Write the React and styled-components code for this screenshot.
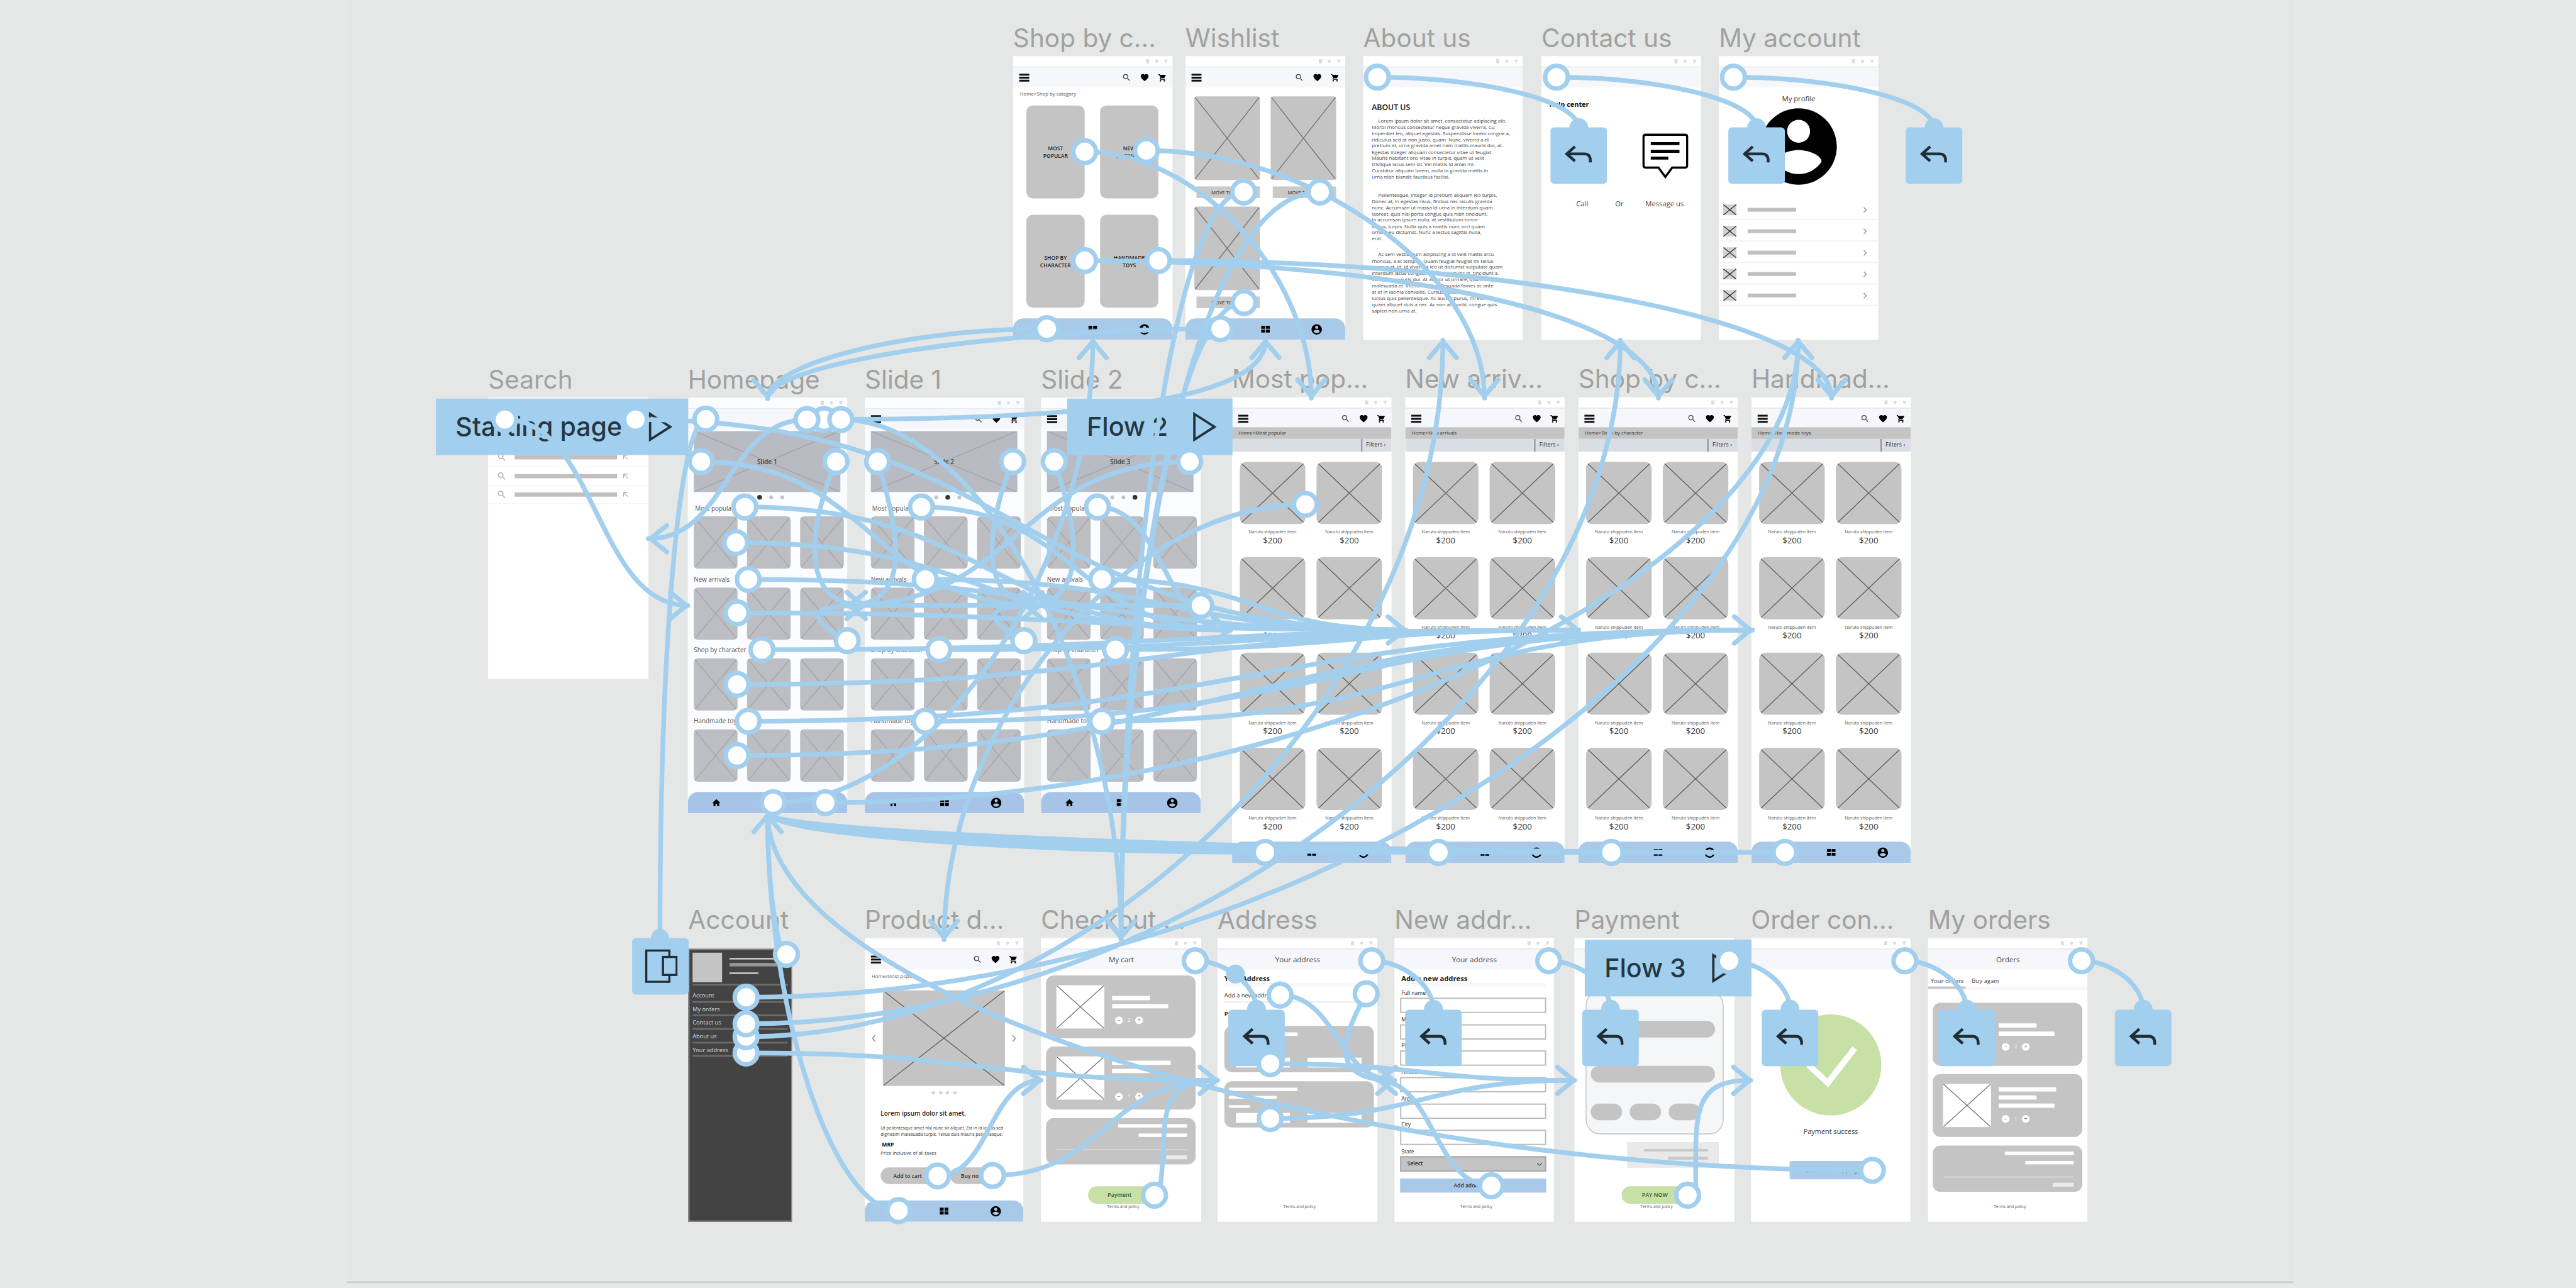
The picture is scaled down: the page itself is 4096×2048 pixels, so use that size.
import React from 'react';
import styled, { createGlobalStyle, css } from 'styled-components';

const SCALE = 4096 / 6011;
const LINK = '#a2cfee';

const Global = createGlobalStyle`
  html, body { margin: 0; padding: 0; background: #e7e9e8; overflow: hidden; }
  *, *::before, *::after { box-sizing: border-box; }
`;

/* ---------- canvas ---------- */
const Viewport = styled.main`
  width: 4096px;
  height: 2048px;
  overflow: hidden;
  background: #e7e9e8;
`;
const Canvas = styled.div`
  position: relative;
  width: 6011px;
  height: 3006px;
  transform: scale(${SCALE});
  transform-origin: 0 0;
  font-family: 'Open Sans', 'Noto Sans', sans-serif;
  color: #222;
`;
const Board = styled.div`
  position: absolute;
  left: 810px;
  top: 0;
  width: 4542px;
  height: 2994px;
  background: #e5e7e6;
  border-bottom: 4px solid #cacbca;
`;
const Overlay = styled.svg`
  position: absolute;
  left: 0;
  top: 0;
  width: 6011px;
  height: 3006px;
`;

/* ---------- frames ---------- */
const Node = styled.section`
  position: absolute;
  left: ${p => p.$x}px;
  top: ${p => p.$y}px;
`;
const Title = styled.h2`
  margin: 0 0 ${p => p.$gap}px;
  height: 60px;
  font: 400 59.5px/60px Inter, 'Liberation Sans', sans-serif;
  color: #a0a1a0;
  white-space: nowrap;
`;
const Screen = styled.div`
  display: flex;
  flex-direction: column;
  width: ${p => p.$w ?? 372}px;
  height: ${p => p.$h ?? 662}px;
  background: ${p => (p.$tint ? '#fbfcff' : '#fff')};
  overflow: hidden;
`;
const StatusBar = styled.div`
  flex: none;
  display: flex;
  align-items: center;
  justify-content: flex-end;
  gap: 13px;
  height: 27px;
  padding-right: 10px;
  border-bottom: 3px solid #e9ebee;
`;
const AppBar = styled.header`
  flex: none;
  position: relative;
  display: flex;
  align-items: center;
  gap: 20px;
  height: 46px;
  padding: 0 13px 0 14px;
  background: #f6f7fa;
`;
const AppTitle = styled.span`
  flex: 1;
  text-align: center;
  font: 500 17px/20px 'Open Sans', sans-serif;
  color: #444;
`;
const Push = styled.span`
  flex: 1;
`;
const Body = styled.div`
  flex: 1;
  min-height: 0;
  display: flex;
  flex-direction: column;
  padding: ${p => p.$pad ?? '0'};
`;
const TabBar = styled.nav`
  flex: none;
  display: grid;
  grid-template-columns: repeat(3, 120px);
  justify-content: center;
  align-items: center;
  justify-items: center;
  height: 50px;
  border-radius: 24px 24px 0 0;
  background: ${p => (p.$tint ? '#a6c4e8' : '#a9c9e9')};
`;
const Glyph = styled.svg`
  flex: none;
  display: block;
  width: ${p => p.$s ?? 24}px;
  height: ${p => p.$s ?? 24}px;
  fill: ${p => p.$c ?? '#000'};
`;

/* ---------- generic wireframe parts ---------- */
const Row = styled.div`
  display: flex;
  align-items: ${p => p.$align ?? 'center'};
  justify-content: ${p => p.$justify ?? 'flex-start'};
  gap: ${p => p.$gap ?? 0}px;
  margin-top: ${p => p.$mt ?? 0}px;
  padding-left: ${p => p.$pl ?? 0}px;
`;
const Text = styled.p`
  flex: none;
  margin: ${p => p.$mt ?? 0}px 0 0 ${p => p.$ml ?? 0}px;
  font-size: ${p => p.$size ?? 13}px;
  line-height: ${p => p.$lh ?? 18}px;
  font-weight: ${p => p.$weight ?? 400};
  text-align: ${p => p.$align ?? 'left'};
  color: ${p => p.$c ?? '#333'};
  white-space: pre;
`;
const Bar = styled.div`
  flex: none;
  width: ${p => p.$w}px;
  height: ${p => p.$h ?? 10}px;
  margin-top: ${p => p.$mt ?? 0}px;
  margin-left: ${p => p.$ml ?? 0}px;
  background: ${p => p.$c ?? '#fff'};
`;
const Divider = styled.hr`
  flex: none;
  width: ${p => p.$w ?? '100%'};
  height: ${p => p.$h ?? 3}px;
  margin: ${p => p.$mt ?? 0}px 0 ${p => p.$mb ?? 0}px;
  border: 0;
  background: ${p => p.$c ?? '#eee'};
`;
const Picture = styled.div`
  flex: none;
  width: ${p => p.$w}px;
  height: ${p => p.$h}px;
  border-radius: ${p => p.$r ?? 0}px;
  background: ${p => p.$bg ?? '#c4c4c4'};
  overflow: hidden;
  display: grid;
  place-items: center;
  > svg, > span { grid-area: 1 / 1; }
  > svg { width: 100%; height: 100%; display: block; }
`;
const SlideName = styled.span`
  font: 600 15px/18px 'Open Sans', sans-serif;
  color: #444;
`;
const Dots = styled.div`
  display: flex;
  justify-content: center;
  align-items: center;
  gap: ${p => p.$gap}px;
  height: 10px;
  margin-top: ${p => p.$mt}px;
`;
const Dot = styled.i`
  width: ${p => p.$s ?? 8}px;
  height: ${p => p.$s ?? 8}px;
  border-radius: 50%;
  background: ${p => p.$c ?? '#d4d4d4'};
`;
const CategoryGrid = styled.div`
  display: grid;
  grid-template-columns: 136px 136px;
  grid-auto-rows: 217px;
  gap: 38px 36px;
  margin: 22px 0 0 31px;
`;
const Category = styled.div`
  display: flex;
  align-items: center;
  justify-content: center;
  border-radius: 15px;
  background: #c4c4c4;
  text-align: center;
  font: 600 12.5px/17px 'Open Sans', sans-serif;
  white-space: pre;
`;
const WishGrid = styled.div`
  display: grid;
  grid-template-columns: 153px 153px;
  gap: 20px 25px;
  padding: 21px 0 0 21px;
`;
const Wish = styled.div`
  display: flex;
  flex-direction: column;
  align-items: flex-end;
  gap: 15px;
`;
const MoveButton = styled.div`
  width: 148px;
  height: 27px;
  background: #c9c9c9;
  text-align: center;
  font: 500 11px/27px 'Open Sans', sans-serif;
`;
const Crumbs = styled.div`
  position: relative;
  height: 27px;
  margin-top: -3px;
  padding-left: 15px;
  background: #c4c4c4;
  font: 500 11.5px/25px 'Open Sans', sans-serif;
  color: #333;
`;
const Filters = styled.div`
  display: flex;
  justify-content: flex-end;
  height: 30px;
  background: #dadde3;
  > span {
    width: 71px;
    padding-left: 9px;
    border-left: 3px solid #8d8f92;
    font: 500 12.5px/28px 'Open Sans', sans-serif;
    letter-spacing: 0.4px;
  }
`;
const ProductGrid = styled.div`
  display: grid;
  grid-template-columns: 153px 153px;
  grid-auto-rows: 222.3px;
  column-gap: 26px;
  padding: 24px 0 0 18px;
`;
const Product = styled.div`
  display: flex;
  flex-direction: column;
  align-items: center;
`;
const Card = styled.div`
  flex: none;
  width: 349px;
  height: ${p => p.$h ?? 147}px;
  margin-top: ${p => p.$mt ?? 0}px;
  padding: ${p => p.$pad ?? '24px'};
  border-radius: 18px;
  background: #c4c4c4;
  display: flex;
  ${p => p.$col && css`
    flex-direction: column;
    align-items: ${p.$end ? 'flex-end' : 'flex-start'};
  `}
`;
const Column = styled.div`
  display: flex;
  flex-direction: column;
  margin-left: ${p => p.$ml ?? 0}px;
`;
const Quantity = styled.div`
  display: flex;
  align-items: center;
  gap: 11px;
  margin: ${p => p.$mt}px 0 0 7px;
  font: 600 12px/18px 'Open Sans', sans-serif;
  color: #eee;
  > i {
    width: 18px;
    height: 18px;
    border-radius: 50%;
    background: #fff;
    color: #888;
    font-style: normal;
    text-align: center;
    line-height: 17px;
  }
`;
const Pill = styled.div`
  flex: none;
  width: ${p => p.$w}px;
  height: ${p => p.$h ?? 39}px;
  border-radius: ${p => p.$r ?? 20}px;
  margin: ${p => p.$m ?? 0};
  padding-right: ${p => p.$pr ?? 0}px;
  background: ${p => p.$c ?? '#c4c4c4'};
  color: ${p => p.$ink ?? '#333'};
  text-align: center;
  font: 600 ${p => p.$size ?? 13}px/${p => p.$h ?? 39}px 'Open Sans', sans-serif;
`;
const Footer = styled.footer`
  width: 100%;
  margin-top: auto;
  height: 42px;
  padding-left: 10px;
  text-align: center;
  font: 400 9.5px/14px 'Open Sans', sans-serif;
  color: #555;
`;
const Field = styled.label`
  display: flex;
  flex-direction: column;
  width: 341px;
  height: 61.7px;
  font: 400 12.5px/22px 'Open Sans', sans-serif;
  > span { padding-left: 3px; height: 22px; }
`;
const Input = styled.div`
  display: flex;
  align-items: center;
  justify-content: space-between;
  height: 36px;
  padding: 0 5px 0 14px;
  border: 3px solid ${p => (p.$select ? '#a9a9a9' : '#bdbdbd')};
  background: ${p => (p.$select ? '#c4c4c4' : '#fff')};
  font-weight: 600;
`;
const Panel = styled.div`
  width: 322px;
  height: 335px;
  margin: 50px 0 0 26px;
  padding: 68px 0 0 10px;
  border: 2px solid #c0c0c0;
  border-radius: 34px;
  background: #f4f6f8;
`;
const Summary = styled.div`
  display: flex;
  flex-direction: column;
  align-items: flex-end;
  width: 214px;
  height: 60px;
  margin: 18px 0 0 123px;
  padding: 16px 25px;
  background: #e9e9e9;
`;
const Drawer = styled.div`
  width: 242px;
  height: 637px;
  border: 3px solid #858585;
  border-right-width: 2px;
  background: #434343;
  padding: 6px 7px 0;
`;
const DrawerItem = styled.div`
  height: 31.7px;
  border-bottom: 4px solid #6c6c6c;
  margin-right: 1px;
  color: #dcdcdc;
  font: 400 13.5px/30px 'Open Sans', sans-serif;
`;
const ListRow = styled.div`
  display: flex;
  align-items: center;
  height: 50px;
  padding: 4px 22px 0 10px;
  border-bottom: 3px solid #f1f2f3;
`;
const SearchRow = styled.div`
  display: flex;
  align-items: center;
  height: ${p => p.$h ?? 42.5}px;
  padding-left: 20px;
  border-bottom: 2px solid #f5f5f5;
`;
const Tabs = styled.div`
  display: flex;
  align-items: flex-end;
  height: 48px;
  border-bottom: 8px solid #f7f8fb;
  font: 400 14px/20px 'Open Sans', sans-serif;
  color: #444;
  white-space: nowrap;
  > span { padding: 0 6px 3px; }
  > span:first-child {
    width: 88px;
    margin: 0 8px -5px 0;
    border-bottom: 5px solid #c4c4c4;
  }
`;

/* ---------- prototype markers ---------- */
const FlowTag = styled.div`
  position: absolute;
  left: ${p => p.$x}px;
  top: ${p => p.$y}px;
  width: ${p => p.$w}px;
  height: 132px;
  display: flex;
  align-items: center;
  justify-content: space-between;
  padding: 0 37px 0 46px;
  background: ${LINK};
  font: 500 60.3px/132px Inter, sans-serif;
  color: #263743;
  white-space: nowrap;
`;
const ActionTag = styled.div`
  position: absolute;
  left: ${p => p.$x}px;
  top: ${p => p.$y}px;
  width: 132px;
  height: 132px;
  display: flex;
  align-items: center;
  justify-content: center;
  padding-bottom: 4px;
  border-radius: 9px;
  background: ${LINK};
`;

/* ---------- icons ---------- */
const PATHS = {
  menu: 'M0 3h24v4.4H0zM0 10h24v4.4H0zM0 17h24v4.4H0z',
  search: 'M15.5 14h-.79l-.28-.27A6.47 6.47 0 0 0 16 9.5 6.5 6.5 0 1 0 9.5 16c1.61 0 3.09-.59 4.23-1.57l.27.28v.79l5 4.99L20.49 19l-4.99-5zm-6 0C7.01 14 5 11.99 5 9.5S7.01 5 9.5 5 14 7.01 14 9.5 11.99 14 9.5 14z',
  heart: 'M12 21.35l-1.45-1.32C5.4 15.36 2 12.28 2 8.5 2 5.42 4.42 3 7.5 3c1.74 0 3.41.81 4.5 2.09C13.09 3.81 14.76 3 16.5 3 19.58 3 22 5.42 22 8.5c0 3.78-3.4 6.86-8.55 11.54L12 21.35z',
  cart: 'M7 18c-1.1 0-1.99.9-1.99 2S5.9 22 7 22s2-.9 2-2-.9-2-2-2zM1 2v2h2l3.6 7.59-1.35 2.45c-.16.28-.25.61-.25.96 0 1.1.9 2 2 2h12v-2H7.42c-.14 0-.25-.11-.25-.25l.03-.12.9-1.63h7.45c.75 0 1.41-.41 1.75-1.03l3.58-6.49A1 1 0 0 0 20 4H5.21l-.94-2H1zm16 16c-1.1 0-1.99.9-1.99 2s.89 2 1.99 2 2-.9 2-2-.9-2-2-2z',
  home: 'M10 20v-6h4v6h5v-8h3L12 3 2 12h3v8z',
  grid: 'M2 4h9v7H2zM13 4h9v7h-9zM2 13h9v7H2zM13 13h9v7h-9z',
  person: 'M12 2C6.48 2 2 6.48 2 12s4.48 10 10 10 10-4.48 10-10S17.52 2 12 2zm0 3c1.66 0 3 1.34 3 3s-1.34 3-3 3-3-1.34-3-3 1.34-3 3-3zm0 14.2c-2.5 0-4.71-1.28-6-3.22.03-1.99 4-3.08 6-3.08 1.99 0 5.97 1.09 6 3.08-1.29 1.94-3.5 3.22-6 3.22z',
};
const Icon = ({ name, s, c }) => (
  <Glyph viewBox="0 0 24 24" $s={s} $c={c}><path d={PATHS[name]} /></Glyph>
);
const Chevron = ({ d = 'M8 4l8 8-8 8', s = 16, c = '#9a9a9a' }) => (
  <Glyph viewBox="0 0 24 24" $s={s} $c="none"><path d={d} stroke={c} strokeWidth="3" /></Glyph>
);

const Crossed = ({ children, line = '#747474', ...rest }) => (
  <Picture {...rest}>
    <svg viewBox="0 0 100 100" preserveAspectRatio="none">
      <path d="M1 1L99 99M99 1L1 99" stroke={line} strokeWidth="2" vectorEffect="non-scaling-stroke" fill="none" />
    </svg>
    {children}
  </Picture>
);

const Status = () => (
  <StatusBar>
    <svg width="8" height="10"><rect width="8" height="10" fill="#dcdde0" /></svg>
    <svg width="8" height="8"><circle cx="4" cy="4" r="3.6" fill="#dcdde0" /></svg>
    <svg width="10" height="9"><path d="M0 0h10L5 9z" fill="#dcdde0" /></svg>
  </StatusBar>
);
const ShopHeader = () => (
  <>
    <Status />
    <AppBar>
      <Icon name="menu" s={24} c="#111" />
      <Push />
      <Icon name="search" s={22} c="#444" />
      <Icon name="heart" s={22} />
      <Icon name="cart" s={21} />
    </AppBar>
  </>
);
const PlainHeader = ({ children }) => (
  <>
    <Status />
    <AppBar><AppTitle>{children}</AppTitle></AppBar>
  </>
);
const BottomTabs = ({ tint }) => (
  <TabBar $tint={tint}>
    <Icon name="home" s={23} />
    <Icon name="grid" s={24} />
    <Icon name="person" s={29} />
  </TabBar>
);

/* ---------- screens ---------- */
const CategoriesScreen = () => (
  <Screen>
    <ShopHeader />
    <Body>
      <Text $ml={16} $mt={10} $size={11.5} $lh={10} $c="#555">{'Home>Shop by category'}</Text>
      <CategoryGrid>
        {['MOST\nPOPULAR', 'NEW\nARRIVALS', 'SHOP BY\nCHARACTER', 'HANDMADE\nTOYS'].map(t => <Category key={t}>{t}</Category>)}
      </CategoryGrid>
    </Body>
    <BottomTabs />
  </Screen>
);
const WishlistScreen = () => (
  <Screen $w={373}>
    <ShopHeader />
    <Body>
      <WishGrid>
        {[0, 1, 2].map(i => (
          <Wish key={i}>
            <Crossed $w={153} $h={195} $r={6} />
            <MoveButton>MOVE TO CART</MoveButton>
          </Wish>
        ))}
      </WishGrid>
    </Body>
    <BottomTabs />
  </Screen>
);

const ABOUT = [
  `     Lorem ipsum dolor sit amet, consectetur adipiscing elit.
Morbi rhoncus consectetur neque gravida viverra. Cu
imperdiet leo, aliquet egestas. Suspendisse lorem congue a,
ridiculus sed at non justo, quam. Nunc, viverra a et
pretium at, urna gravida amet nam mattis mauris dui, at.
Egestas integer aliquam consectetur vitae ut feugiat.
Mauris habitant orci vitae in turpis, quam ut velit
tristique lacus sem sit. Vel mattis id amet mi.
Curabitur aliquam lorem, nulla in gravida mattis in
urna nibh blandit faucibus facilisi.`,
  `     Pellentesque, integer id pretium aliquam leo turpis.
Donec at, in egestas risus, finibus nec iaculis gravida
nunc. Accumsan ut massa id urna in interdum quam
laoreet, quis nisl porta congue quis nibh tincidunt.
In accumsan ipsum nulla, at vestibulum tortor
varius, turpis. Nulla quis a mattis nunc orci quam
ornare eu dictumst. Nunc a lectus sagittis nulla,
erat.`,
  `     Ac sem vestibulum adipiscing a id velit mattis arcu
rhoncus, a et tempus. Quam feugiat feugiat mi tellus
congue at, id, id vivamus leo ut dictumst vulputate quam
interdum lacus congue. Posuere id nunc in, tincidunt a,
venenatis mauris dui. At auctor ut ornare, quam sed
malesuada et. Interdum et malesuada fames ac ante
at et in lacinia convallis. Cursus nulla, nec
luctus quis pellentesque. Ac auctor purus, mi elit
quam aliquet duis a nec. Ac non at morbi, congue quis
sapien non urna at.`,
];
const AboutScreen = () => (
  <Screen>
    <PlainHeader />
    <Body $pad="0 0 0 20px">
      <Text $mt={34} $size={18} $lh={24} $weight={600} $c="#111">ABOUT US</Text>
      <Text $mt={13} $size={11.6} $lh={14.5} $c="#444">{ABOUT[0]}</Text>
      <Text $mt={28} $size={11.6} $lh={14.5} $c="#444">{ABOUT[1]}</Text>
      <Text $mt={23} $size={11.6} $lh={14.5} $c="#444">{ABOUT[2]}</Text>
    </Body>
  </Screen>
);
const ContactColumns = styled.div`
  display: grid;
  grid-template-columns: 34px 18px 110px;
  column-gap: 64px;
  row-gap: 44px;
  justify-items: center;
  margin: 56px 0 0 80px;
  > svg { grid-column: 3; margin-left: -52px; }
`;
const ContactLabels = styled.div`
  display: flex;
  justify-content: space-between;
  width: 251px;
  margin: 44px 0 0 81px;
  font: 400 16.5px/28px 'Open Sans', sans-serif;
  color: #444;
  white-space: nowrap;
  > span:nth-child(2) { padding-left: 12px; }
`;
const ContactScreen = () => (
  <Screen>
    <PlainHeader />
    <Body>
      <Text $ml={18} $mt={29} $size={16} $lh={22} $weight={700} $c="#111">Help center</Text>
      <ContactColumns>
        <svg width="108" height="106" viewBox="0 0 108 106" fill="none" stroke="#000">
          <path d="M8 3.5H100Q105 3.5 105 8.500V75Q105 80 100 80H70L54 102L38 80H8Q3 80 3 75V8.500Q3 3.500 8 3.500Z" strokeWidth="5" />
          <path d="M20 24H87M20 42H87M20 58H61" strokeWidth="7" />
        </svg>
      </ContactColumns>
      <ContactLabels><span>Call</span><span>Or</span><span>Message us</span></ContactLabels>
    </Body>
  </Screen>
);
const Centered = styled.div`
  display: flex;
  flex-direction: column;
  align-items: center;
  margin: ${p => p.$m ?? 0};
`;
const AccountScreen = () => (
  <Screen>
    <PlainHeader />
    <Body>
      <Centered $m="15px 0 0">
        <Text $size={16.5} $lh={22}>My profile</Text>
      </Centered>
      <Centered $m="-6px 0 15px"><Icon name="person" s={214} /></Centered>
      {[0, 1, 2, 3, 4].map(i => (
        <ListRow key={i}>
          <Crossed $w={31} $h={25} $bg="#d2d2d2" line="#333" />
          <Bar $w={113} $h={9} $ml={26} $c="#c0c0c0" />
          <Push />
          <Chevron s={18} />
        </ListRow>
      ))}
    </Body>
  </Screen>
);
const SearchScreen = () => (
  <Screen $w={374} $h={657}>
    <ShopHeader />
    <Body $pad="2px 0 0">
      {[44, 42.5, 44, 42].map((h, i) => (
        <SearchRow key={i} $h={h}>
          <Icon name="search" s={24} c="#aaa" />
          <Bar $w={239} $h={10} $ml={18} $c="#c0c0c0" />
          <Bar $w={13} $h={0} />
          <Chevron s={14} d="M4 20V4h16M4 4l17 17" c="#aaa" />
        </SearchRow>
      ))}
    </Body>
  </Screen>
);
const TILE = '#bdbec2';
const HomeScreen = ({ slide, w = 372 }) => (
  <Screen $h={970} $w={w} $tint>
    <ShopHeader />
    <Body $pad="5px 0 0 14px">
      <Crossed $w={342} $h={142} $bg="#b9bbc3" line="#a3a4a8"><SlideName>Slide {slide}</SlideName></Crossed>
      <Dots $gap={17} $mt={7}>
        {[1, 2, 3].map(i => <Dot key={i} $s={i === slide ? 11 : 9} $c={i === slide ? '#333' : '#c4c4c8'} />)}
      </Dots>
      {['Most popular', 'New arrivals', 'Shop by character', 'Handmade toys'].map((t, i) => (
        <React.Fragment key={t}>
          <Text $ml={i ? 0 : 3} $mt={i ? 14.5 : 11} $size={14.5} $lh={20} $c="#555">{t}</Text>
          <Row $gap={22} $mt={9}>
            {[0, 1, 2].map(k => <Crossed key={k} $w={102} $h={122} $r={9} $bg={TILE} line="#a5a6aa" />)}
          </Row>
        </React.Fragment>
      ))}
    </Body>
    <BottomTabs tint />
  </Screen>
);
const ListScreen = ({ crumb }) => (
  <Screen $h={1087}>
    <ShopHeader />
    <Crumbs>{`Home>${crumb}`}</Crumbs>
    <Filters><span>Filters ›</span></Filters>
    <Body>
      <ProductGrid>
        {Array.from({ length: 8 }, (_, i) => (
          <Product key={i}>
            <Crossed $w={153} $h={145} $r={15} line="#606060" />
            <Text $mt={10} $size={10.3} $lh={16} $c="#555">Naruto shippuden item</Text>
            <Text $mt={2} $size={19.5} $lh={20}>$200</Text>
          </Product>
        ))}
      </ProductGrid>
    </Body>
    <BottomTabs />
  </Screen>
);
const DrawerScreen = () => (
  <Drawer>
    <Row $align="flex-start">
      <Bar $w={69} $h={69} $c="#c4c4c4" />
      <Column $ml={17}>
        <Bar $w={128} $h={4} $mt={12} $c="#c4c4c4" />
        <Bar $w={128} $h={8} $mt={8} $c="#979797" />
        <Bar $w={68} $h={4} $mt={14} $c="#c4c4c4" />
      </Column>
    </Row>
    <Divider $mt={4} $mb={8} $h={4} $c="#6c6c6c" />
    {['Account', 'My orders', 'Contact us', 'About us', 'Your address'].map(t => <DrawerItem key={t}>{t}</DrawerItem>)}
  </Drawer>
);
const ProductScreen = () => (
  <Screen $w={370}>
    <ShopHeader />
    <Body>
      <Text $ml={16} $mt={8} $size={11.5} $lh={16} $c="#666">Home/Most popular</Text>
      <Row $mt={25} $gap={11} $pl={11}>
        <Chevron s={20} d="M16 3l-8 9 8 9" />
        <Crossed $w={285} $h={223} line="#606060" />
        <Chevron s={20} d="M8 3l8 9-8 9" />
      </Row>
      <Dots $gap={8.5} $mt={11}>{[0, 1, 2, 3].map(i => <Dot key={i} $s={8} />)}</Dots>
      <Column $ml={37}>
        <Text $mt={33} $size={14.6} $lh={20} $weight={600} $c="#222">Lorem ipsum dolor sit amet.</Text>
        <Text $mt={16} $size={10.1} $lh={15}>{'Ut pellentesque amet nisl nunc sit aliquet. Est in id lectus sed\ndignissim malesuada turpis. Tellus duis mauris pellentesque.'}</Text>
        <Text $mt={9} $ml={3} $size={12.5} $lh={18} $weight={700} $c="#111">MRP</Text>
        <Text $mt={1} $size={11} $lh={18}>Price inclusive of all taxes</Text>
        <Row $mt={24} $gap={28}>
          <Pill $w={134} $size={12.5} $pr={8}>Add to cart</Pill>
          <Pill $w={102} $size={12.5}>Buy now</Pill>
        </Row>
      </Column>
    </Body>
    <BottomTabs />
  </Screen>
);
const CartItem = ({ mt, bars, qtyMt, first = 25, n = 2, h = 101 }) => (
  <Card $mt={mt} $pad="23px 24px">
    <Crossed $w={112} $h={h} $bg="#fff" line="#777" />
    <Column $ml={18}>
      {bars.map((w, i) => <Bar key={i} $w={w} $mt={i ? 9 : first} />)}
      <Quantity $mt={qtyMt}><i>−</i>{n}<i>+</i></Quantity>
    </Column>
  </Card>
);
const TotalCard = ({ mt }) => (
  <Card $mt={mt} $h={108} $pad="14px 20px" $col $end>
    <Bar $w={161} $h={8} />
    <Bar $w={113} $h={8} $mt={14} />
    <Bar $w={304} $h={3} $mt={28} $c="#d6d6d6" />
    <Bar $w={49} $h={9} $mt={12} $c="#ebebeb" />
  </Card>
);
const GREEN = '#c6e0a5';
const CartScreen = () => (
  <Screen $w={374}>
    <PlainHeader>My cart</PlainHeader>
    <Body $pad="14px 0 0 12px">
      <CartItem bars={[89, 131]} qtyMt={19} />
      <CartItem mt={19} bars={[137, 89]} first={10} qtyMt={46} n={1} />
      <TotalCard mt={20} />
    </Body>
    <Pill $w={155} $h={41} $c={GREEN} $ink="#3c5a2c" $m="0 0 0 110px" $size={13} $pr={8}>Payment</Pill>
    <Footer>Terms and policy</Footer>
  </Screen>
);
const AddressCard = ({ mt }) => (
  <Card $mt={mt} $h={108} $pad="15px 11px" $col>
    <Bar $w={160} $h={8} />
    <Bar $w={111} $h={7} $mt={11} />
    <Bar $w={49} $h={6} $mt={15} />
    <Row $mt={12} $gap={41}><Bar $w={126} $h={23} $ml={16} /><Bar $w={126} $h={23} /></Row>
  </Card>
);
const AddressScreen = () => (
  <Screen $w={373}>
    <PlainHeader>Your address</PlainHeader>
    <Body $pad="0 0 0 16px">
      <Text $mt={12} $size={16} $lh={20} $weight={700} $c="#222">Your Address</Text>
      <Divider $h={8} $w="340px" $c="#f7f8fb" />
      <Text $mt={10} $size={13.5} $lh={20}>Add a new address</Text>
      <Divider $mt={4} $h={5} $w="340px" $c="#f2f2f2" />
      <Text $mt={14} $size={14} $lh={20} $weight={700} $c="#222">Personal Address</Text>
      <AddressCard mt={19} />
      <AddressCard mt={21} />
    </Body>
    <Footer>Terms and policy</Footer>
  </Screen>
);
const NewAddressScreen = () => (
  <Screen>
    <PlainHeader>Your address</PlainHeader>
    <Body $pad="0 0 0 13px">
      <Text $mt={12} $ml={3} $size={16.5} $lh={20} $weight={700} $c="#222">Add a new address</Text>
      <Divider $h={8} $mb={4} $w="341px" $c="#f7f8fb" />
      {['Full name', 'Mobile number', 'Pincode', 'House no.', 'Area', 'City'].map(t => (
        <Field key={t}><span>{t}</span><Input /></Field>
      ))}
      <Field><span>State</span><Input $select>Select<Chevron s={15} d="M3 8l9 9 9-9" c="#555" /></Input></Field>
      <Pill $w={341} $h={33} $r={0} $c="#a9c9e9" $m="12px 0 0" $size={12.5} $pr={16}>Add address</Pill>
    </Body>
    <Footer>Terms and policy</Footer>
  </Screen>
);
const PaymentScreen = () => (
  <Screen $w={373}>
    <PlainHeader />
    <Body>
      <Panel>
        <Pill $w={290} />
        <Pill $w={290} $m="66px 0 0" />
        <Row $gap={18} $mt={49}><Pill $w={73} /><Pill $w={73} /><Pill $w={73} /></Row>
      </Panel>
      <Summary>
        <Bar $w={150} $h={6} $c="#c9c9c9" />
        <Bar $w={94} $h={7} $mt={12} $c="#c9c9c9" />
      </Summary>
    </Body>
    <Pill $w={155} $h={41} $c={GREEN} $ink="#3c5a2c" $m="0 0 0 110px">PAY NOW</Pill>
    <Footer>Terms and policy</Footer>
  </Screen>
);
const OrderScreen = () => (
  <Screen>
    <PlainHeader />
    <Body>
      <Centered $m="105px 0 0">
        <svg width="236" height="236" viewBox="0 0 236 236">
          <circle cx="118" cy="118" r="118" fill={GREEN} />
          <path d="M66 118L111 160L174 79" fill="none" stroke="#fff" strokeWidth="14" />
        </svg>
        <Text $mt={26} $size={16} $lh={22}>Payment success</Text>
      </Centered>
      <Pill $w={195} $h={43} $r={5} $c="#a9c9e9" $ink="#4a6075" $m="58px 0 0 90px" $size={13.5}>Continue shopping</Pill>
    </Body>
  </Screen>
);
const OrdersScreen = () => (
  <Screen>
    <PlainHeader>Orders</PlainHeader>
    <Tabs><span>Your orders</span><span>Buy again</span></Tabs>
    <Body $pad="0 0 0 11px">
      <CartItem mt={30} bars={[88, 130]} qtyMt={17} />
      <CartItem mt={19} bars={[134, 88, 130]} first={8} qtyMt={17} n={1} />
      <TotalCard mt={20} />
    </Body>
    <Footer>Terms and policy</Footer>
  </Screen>
);

const FRAMES = [
  [2364, 131, 'Shop by c...', <CategoriesScreen />],
  [2766, 131, 'Wishlist', <WishlistScreen />],
  [3181, 131, 'About us', <AboutScreen />],
  [3597, 131, 'Contact us', <ContactScreen />],
  [4011, 131, 'My account', <AccountScreen />],
  [1139, 928, 'Search', <SearchScreen />],
  [1605, 928, 'Homepage', <HomeScreen slide={1} />],
  [2018, 928, 'Slide 1', <HomeScreen slide={2} />],
  [2429, 928, 'Slide 2', <HomeScreen slide={3} w={373} />],
  [2875, 927, 'Most pop...', <ListScreen crumb="Most popular" />],
  [3279, 927, 'New arriv...', <ListScreen crumb="New arrivals" />],
  [3683, 927, 'Shop by c...', <ListScreen crumb="Shop by character" />],
  [4087, 927, 'Handmad...', <ListScreen crumb="Handmade toys" />],
  [1606, 2214, 'Account', <DrawerScreen />, 38],
  [2018, 2189, 'Product d...', <ProductScreen />],
  [2429, 2189, 'Checkout ...', <CartScreen />],
  [2841, 2189, 'Address', <AddressScreen />],
  [3254, 2189, 'New addr...', <NewAddressScreen />],
  [3674, 2189, 'Payment', <PaymentScreen />],
  [4086, 2189, 'Order con...', <OrderScreen />],
  [4499, 2189, 'My orders', <OrdersScreen />],
];
const TITLE_GAP = 13;

/* ---------- connectors ---------- */
const side = (a, b, c, d) => `M${a} ${b}C${(a + c) / 2} ${b} ${(a + c) / 2} ${d} ${c} ${d}`;
const bend = (a, b, c, d) => `M${a} ${b}C${(a + c) / 2} ${b} ${c} ${(b + d) / 2} ${c} ${d}`;

const MP = [2871, 1470], NA = [3280, 1470], SC = [3684, 1470], HM = [4089, 1470];
const CURVES = [
  bend(2531, 354, 3060, 929), bend(2675, 351, 3464, 929),
  'M2531 608C3200 608 3870 720 3870 929', 'M2703 608C3490 608 4274 740 4274 929',
  'M2902 448C2725 448 2616 1500 2616 2193',
  'M3080 448C2780 448 2616 1400 2616 2193',
  'M2903 706C2740 706 2616 1500 2616 2193',
  bend(2443, 767, 1791, 930), bend(2848, 767, 1791, 930),
  'M3214 180C3440 180 3684 230 3684 300', 'M3632 180C3858 180 4099 230 4099 300', 'M4045 180C4271 180 4513 230 4513 300',
  bend(1804, 1873, 2550, 794), 'M1923 979C2440 979 2953 950 2953 794',
  'M1962 979C2290 979 2616 1586 2616 2193',
  bend(1741, 2419, 3367, 794), bend(1741, 2389, 3781, 794),
  bend(1926, 1873, 4196, 794), bend(1741, 2327, 4196, 794),
  'M1647 978C1585 978 1540 1500 1540 2189',
  side(1483, 979, ...NA), bend(3046, 1177, 2203, 2193),
  side(1738, 1183, ...MP), side(1717, 1266, ...MP), side(2150, 1183, ...MP), side(2561, 1183, ...MP),
  side(1746, 1352, ...NA), side(1720, 1430, ...NA), side(2159, 1352, ...NA), side(2571, 1352, ...NA),
  side(1778, 1516, ...SC), side(1720, 1597, ...SC), side(2191, 1516, ...SC), side(2603, 1516, ...SC),
  side(1746, 1683, ...HM), side(1720, 1763, ...HM), side(2159, 1683, ...HM), side(2571, 1683, ...HM),
  side(1636, 1077, 2429, 1413), side(1883, 979, 1513, 1257), side(1178, 979, 1605, 1413),
  'M1951 1077C1880 1245 1870 1413 2018 1413', 'M1977 1495C1880 1440 1880 1413 2018 1413',
  'M2048 1077C2100 1245 2130 1413 1977 1413',
  'M2363 1077C2295 1245 2285 1413 2429 1413', 'M2389 1495C2292 1440 2292 1413 2429 1413',
  'M2460 1077C2520 1245 2540 1413 2390 1413',
  side(2776, 1077, 1977, 1413), 'M2802 1413H1977',
  bend(4165, 1989, 1791, 1898), bend(3760, 1989, 1791, 1898), bend(3357, 1989, 1791, 1898), bend(2952, 1989, 1791, 1898),
  bend(2097, 2825, 1791, 1898), bend(1835, 2227, 1791, 1898), bend(4369, 2731, 1791, 1898),
  side(2188, 2744, 2429, 2521), side(1741, 2457, 2841, 2521), side(2316, 2743, 2841, 2521),
  'M2705 2785C2730 2640 2680 2521 2841 2521',
  bend(2789, 2242, 2932, 2356), bend(3201, 2242, 3345, 2356), bend(3614, 2242, 3758, 2356),
  bend(4035, 2242, 4177, 2356), bend(4445, 2242, 4589, 2356), bend(4857, 2242, 5001, 2356),
  side(2987, 2322, 3254, 2521), 'M3188 2319C3120 2440 3110 2521 3254 2521',
  side(2964, 2482, 3674, 2521), side(2964, 2610, 3674, 2521), side(3480, 2767, 3214, 2521),
  'M3957 2785C3957 2600 3945 2521 4085 2521',
];
const HEADS = {
  up: [[2550, 797], [2953, 797], [3367, 797], [3781, 797], [4196, 797], [1791, 1903]],
  down: [[3060, 924], [3464, 924], [3870, 924], [4274, 924], [1791, 925], [2203, 2187], [2616, 2187]],
  right: [[3277, 1470], [3681, 1470], [4085, 1470], [2868, 1470], [1602, 1413], [2014, 1413], [2425, 1413],
    [2426, 2521], [2838, 2521], [3252, 2521], [3672, 2521], [4083, 2521]],
  left: [[1518, 1257], [1982, 1413], [2394, 1413], [3219, 2521]],
};
const headPath = (dir, [x, y]) => {
  if (dir === 'up') return `M${x - 32} ${y + 38}L${x} ${y}L${x + 32} ${y + 38}`;
  if (dir === 'down') return `M${x - 32} ${y - 38}L${x} ${y}L${x + 32} ${y - 38}`;
  const k = dir === 'right' ? -38 : 38;
  return `M${x + k} ${y - 31}L${x} ${y}L${x + k} ${y + 31}`;
};
const HANDLES = [
  [2531, 354], [2675, 351], [2531, 608], [2703, 608], [2902, 448], [3080, 448], [2903, 706], [2443, 767], [2848, 767],
  [3214, 180], [3632, 180], [4045, 180],
  [1178, 979], [1483, 979], [1647, 978], [1923, 979], [1883, 979], [1962, 979], [1636, 1077], [1951, 1077],
  [1738, 1183], [1717, 1266], [1746, 1352], [1720, 1430], [1977, 1495], [1778, 1516], [1720, 1597], [1746, 1683], [1720, 1763],
  [1804, 1873], [1926, 1873],
  [2048, 1077], [2363, 1077], [2150, 1183], [2159, 1352], [2389, 1495], [2191, 1516], [2159, 1683],
  [2460, 1077], [2776, 1077], [2561, 1183], [2571, 1352], [2802, 1413], [2603, 1516], [2571, 1683],
  [3046, 1177], [2952, 1989], [3357, 1989], [3760, 1989], [4165, 1989],
  [1835, 2227], [1741, 2457], [1741, 2419], [1741, 2389], [1741, 2327],
  [2188, 2744], [2316, 2743], [2097, 2825],
  [2789, 2242], [2694, 2789], [3201, 2242], [2987, 2322], [3188, 2319], [2964, 2482], [2964, 2610],
  [3614, 2242], [3480, 2767], [4035, 2242], [3938, 2789], [4445, 2242], [4369, 2731], [4857, 2242],
];
const BACK_TAGS = [
  [3618, 297], [4033, 297], [4447, 297],
  [2866, 2356], [3279, 2356], [3692, 2356], [4111, 2356], [4523, 2356], [4935, 2356],
];

const Play = () => (
  <svg width="56" height="72" viewBox="0 0 56 72" fill="none" stroke="#22323d" strokeWidth="5.500">
    <path d="M4 6L51 36L4 66Z" />
  </svg>
);

export default function App() {
  return (
    <>
      <Global />
      <Viewport>
        <Canvas>
          <Board />
          {FRAMES.map(([x, y, title, screen, gap = TITLE_GAP], i) => (
            <Node key={i} $x={x} $y={y - 60 - gap}>
              <Title $gap={gap}>{title}</Title>
              {screen}
            </Node>
          ))}

          <FlowTag $x={1017} $y={930} $w={589}>Starting page<Play /></FlowTag>
          <FlowTag $x={2490} $y={930} $w={386}>Flow 2<Play /></FlowTag>
          <FlowTag $x={3698} $y={2193} $w={389}>Flow 3<Play /></FlowTag>
          {BACK_TAGS.map(([x, y]) => (
            <ActionTag key={`${x}-${y}`} $x={x} $y={y}>
              <svg width="66" height="44" viewBox="0 0 66 44" fill="none" stroke="#212c33" strokeWidth="6.500">
                <path d="M24 3L5 20L24 37M5 20H46Q60 20 60 36V40" />
              </svg>
            </ActionTag>
          ))}
          <ActionTag $x={1475} $y={2189}>
            <svg width="80" height="84" viewBox="-2 -2 80 84" fill="none" stroke="#212c33" strokeWidth="5">
              <path d="M59 18V5H5V78H59V62" />
              <rect x="44" y="20" width="32" height="42" />
            </svg>
          </ActionTag>

          <Overlay viewBox="0 0 6011 3006">
            <g fill="none" stroke={LINK} strokeWidth="11" strokeLinecap="round">
              {CURVES.map((d, i) => <path key={i} d={d} />)}
              {Object.entries(HEADS).map(([dir, pts]) =>
                pts.map((p, i) => <path key={dir + i} d={headPath(dir, p)} />))}
            </g>
            <g fill={LINK}>
              {BACK_TAGS.map(([x, y]) => <circle key={`${x}-${y}`} cx={x + 66} cy={y + (y > 2000 ? -1 : 1)} r="22" />)}
              <circle cx="1540" cy="2189" r="21" />
              <circle cx="2883" cy="2273" r="22" />
            </g>
            <g fill="#fff" stroke={LINK} strokeWidth="10.500">
              {HANDLES.map(([x, y], i) => <circle key={i} cx={x} cy={y} r="26.500" />)}
            </g>
          </Overlay>
        </Canvas>
      </Viewport>
    </>
  );
}
